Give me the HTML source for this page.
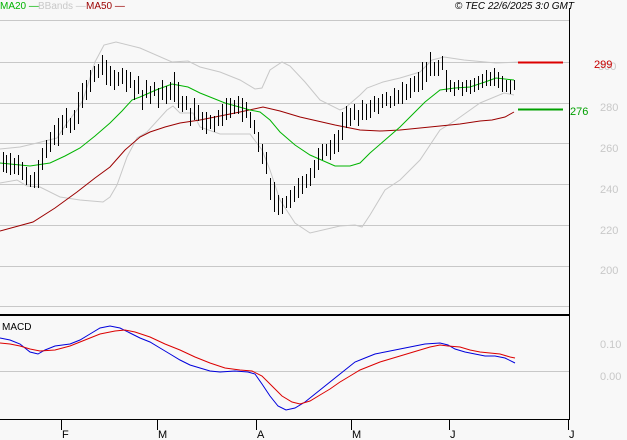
<!DOCTYPE html>
<html><head><meta charset="utf-8"><style>
body{margin:0;background:#f8f8f8;}
svg{display:block;font-family:"Liberation Sans",sans-serif;}
</style></head><body>
<svg width="627" height="440" viewBox="0 0 627 440" xmlns="http://www.w3.org/2000/svg">
<rect width="627" height="440" fill="#f8f8f8"/>
<g stroke="#c8c8c8" stroke-width="1">
<line x1="0" y1="20.5" x2="569" y2="20.5"/>
<line x1="0" y1="62.5" x2="569" y2="62.5"/>
<line x1="0" y1="103.5" x2="569" y2="103.5"/>
<line x1="0" y1="143.5" x2="569" y2="143.5"/>
<line x1="0" y1="184.5" x2="569" y2="184.5"/>
<line x1="0" y1="225.5" x2="569" y2="225.5"/>
<line x1="0" y1="266.5" x2="569" y2="266.5"/>
<line x1="0" y1="306.5" x2="569" y2="306.5"/>
<line x1="0" y1="371.5" x2="569" y2="371.5"/>
</g>
<line x1="0" y1="315" x2="569" y2="315" stroke="#000" stroke-width="2"/>
<line x1="569.5" y1="8" x2="569.5" y2="419" stroke="#000"/>
<line x1="0" y1="419.5" x2="570" y2="419.5" stroke="#000"/>
<g stroke="#000"><line x1="61.5" y1="419" x2="61.5" y2="430"/><line x1="157.5" y1="419" x2="157.5" y2="430"/><line x1="256.5" y1="419" x2="256.5" y2="430"/><line x1="351.5" y1="419" x2="351.5" y2="430"/><line x1="449.5" y1="419" x2="449.5" y2="430"/><line x1="568.5" y1="419" x2="568.5" y2="430"/></g>
<g font-size="11" fill="#000"><text x="62" y="438">F</text><text x="158" y="438">M</text><text x="257" y="438">A</text><text x="352" y="438">M</text><text x="450" y="438">J</text><text x="569" y="438">J</text></g>
<!-- bbands -->
<polyline fill="none" stroke="#c8c8c8" points="0,149 20,147 37,143 57,138 67,123 77,110 83,100 95,62 104,45 116,42 140,48 172,62 188,61 200,67 220,72 240,80 255,89 262,88 270,70 282,62 290,66 305,82 320,100 340,110 345,108 360,95 367,88 383,82 400,78 420,72 432,60 444,57 464,60 496,63 520,62"/>
<polyline fill="none" stroke="#c8c8c8" points="0,183 17,180 27,186 40,187 60,197 80,200 103,202 110,197 117,185 127,157 137,138 147,132 167,110 173,106 180,113 193,113 200,127 220,134 250,134 262,150 270,170 280,200 295,223 310,233 340,226 355,225 362,227 370,215 385,190 400,180 420,160 440,130 456,120 480,103 504,93 514,95"/>
<!-- MA50 -->
<polyline fill="none" stroke="#9b0000" points="0,231 33,222 55,208 77,192 95,178 110,167 125,150 140,137 150,132 165,127 180,123 200,120 225,115 240,112 263,107 280,111 300,117 335,125 345,127 360,130 380,131 400,130 420,128 440,126 460,124 480,121 492,120 505,117 514,112"/>
<!-- MA20 -->
<polyline fill="none" stroke="#00b400" points="0,163 30,166 50,163 65,156 80,148 95,136 110,123 122,111 132,100 140,97 156,90 172,84 188,87 200,93 225,103 250,110 260,112 270,120 280,132 295,145 310,155 335,166 350,166 360,163 370,153 385,140 400,127 415,112 425,102 440,90 455,88 470,87 485,82 496,78 505,79 514,80"/>
<!-- bars -->
<path fill="none" stroke="#000" stroke-width="1" shape-rendering="crispEdges" transform="translate(0.5,0)" d="
M3 152v20 M6 155v18 M10 153v22 M14 158v16 M18 155v20 M22 162v18 M26 167v18 M30 175v12 M34 172v16 M38 160v28 M42 148v22 M46 140v18 M50 132v20 M54 125v20 M58 118v28 M62 115v20 M66 108v20 M70 118v15 M74 110v20 M78 92v32 M82 83v25 M86 80v20 M90 70v22 M94 66v16 M98 64v14 M102 55v20 M106 60v25 M110 66v20 M114 70v20 M118 72v14 M122 68v16 M126 70v22 M130 72v16 M134 80v20 M138 76v18 M142 90v20 M146 80v18 M150 86v18 M154 82v14 M158 88v20 M162 80v20 M166 86v18 M170 82v18 M174 72v30 M178 82v26 M182 96v16 M186 96v14 M190 108v18 M194 98v22 M198 105v16 M202 112v18 M206 112v22 M210 115v14 M214 116v16 M218 110v16 M222 104v22 M226 98v22 M230 98v20 M234 100v14 M238 96v18 M242 98v24 M246 102v16 M250 112v16 M254 120v14 M258 132v20 M262 144v20 M266 152v22 M270 178v22 M274 182v30 M278 195v20 M282 198v16 M286 196v12 M290 190v18 M294 186v16 M298 178v20 M302 176v18 M306 174v14 M310 168v18 M314 160v18 M318 148v22 M322 144v16 M326 144v12 M330 140v20 M334 134v20 M338 130v22 M342 112v28 M346 106v22 M350 108v18 M354 104v16 M358 110v16 M362 100v20 M366 104v16 M370 100v18 M374 96v16 M378 98v16 M382 94v14 M386 92v14 M390 96v12 M394 88v18 M398 90v14 M402 82v22 M406 84v16 M410 78v20 M414 76v16 M418 72v20 M422 62v28 M426 62v20 M430 52v24 M434 62v14 M438 60v16 M442 56v14 M446 70v22 M450 80v12 M454 82v14 M458 80v10 M462 82v14 M466 80v12 M470 80v14 M474 78v14 M478 76v14 M482 74v14 M486 70v16 M490 72v14 M494 68v18 M498 72v16 M502 76v16 M506 80v12 M510 80v14 M514 80v10"/>
<!-- MACD -->
<polyline fill="none" stroke="#0000dc" points="0,338 10,340 20,344 30,352 38,354 45,350 55,346 70,344 80,340 90,334 100,328 110,326 120,328 130,333 140,338 150,342 160,348 170,354 180,360 190,365 200,368 210,371 220,372 235,371 248,372 255,374 262,384 270,396 278,406 286,410 295,408 305,402 315,394 325,386 335,378 345,370 355,362 365,358 375,354 385,352 395,350 405,348 415,346 425,344 440,343 448,345 455,349 465,352 475,354 485,356 495,356 505,358 515,363"/>
<polyline fill="none" stroke="#dc0000" points="0,343 10,344 20,346 30,349 40,351 55,350 70,346 85,340 100,334 115,331 125,330 135,332 150,337 165,344 180,350 195,357 210,363 225,368 240,370 252,371 262,376 272,386 282,396 292,402 300,404 310,401 320,395 330,389 340,382 350,376 360,370 370,366 380,362 390,359 400,356 410,353 420,350 430,347 440,345 448,346 460,347 470,350 480,352 490,353 500,354 510,357 515,358"/>
<!-- level markers -->
<line x1="518" y1="62.5" x2="563" y2="62.5" stroke="#dc0000" stroke-width="2"/>
<line x1="518" y1="109.5" x2="563" y2="109.5" stroke="#00a000" stroke-width="2"/>
<g font-size="11" fill="#c8c8c8">
<text x="598" y="70">300</text><text x="600" y="111">280</text><text x="600" y="152">260</text><text x="600" y="193">240</text><text x="600" y="234">220</text><text x="600" y="274">200</text>
<text x="600" y="348">0.10</text><text x="600" y="380">0.00</text>
</g>
<text x="594" y="68" font-size="11" fill="#c80000">299</text>
<text x="570" y="115" font-size="11" fill="#00a000">276</text>
<text x="2" y="330" font-size="10" fill="#000">MACD</text>
<g font-size="10">
<text x="0" y="9" fill="#00b400">MA20 —</text>
<text x="38" y="9" fill="#c8c8c8">BBands —</text>
<text x="86" y="9" fill="#9b0000">MA50 —</text>
</g>
<text x="574" y="9" font-size="10" font-style="italic" fill="#000" text-anchor="end">© TEC 22/6/2025 3:0 GMT</text>
</svg>
</body></html>
